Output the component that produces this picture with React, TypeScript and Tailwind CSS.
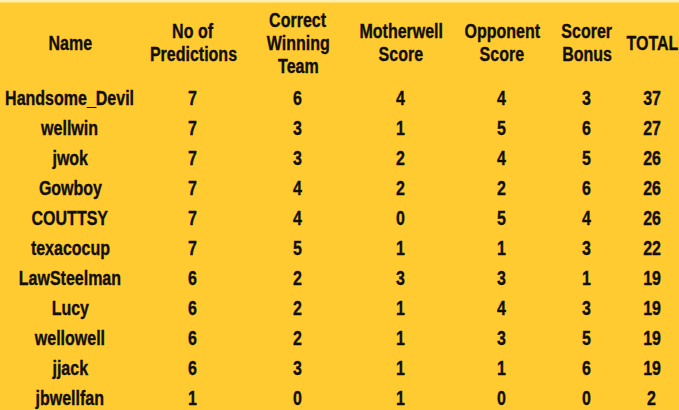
import React from "react";

type Row = {
  name: string;
  predictions: number;
  winning: number;
  motherwell: number;
  opponent: number;
  bonus: number;
  total: number;
};

const ROWS: Row[] = [
  { name: "Handsome_Devil", predictions: 7, winning: 6, motherwell: 4, opponent: 4, bonus: 3, total: 37 },
  { name: "wellwin", predictions: 7, winning: 3, motherwell: 1, opponent: 5, bonus: 6, total: 27 },
  { name: "jwok", predictions: 7, winning: 3, motherwell: 2, opponent: 4, bonus: 5, total: 26 },
  { name: "Gowboy", predictions: 7, winning: 4, motherwell: 2, opponent: 2, bonus: 6, total: 26 },
  { name: "COUTTSY", predictions: 7, winning: 4, motherwell: 0, opponent: 5, bonus: 4, total: 26 },
  { name: "texacocup", predictions: 7, winning: 5, motherwell: 1, opponent: 1, bonus: 3, total: 22 },
  { name: "LawSteelman", predictions: 6, winning: 2, motherwell: 3, opponent: 3, bonus: 1, total: 19 },
  { name: "Lucy", predictions: 6, winning: 2, motherwell: 1, opponent: 4, bonus: 3, total: 19 },
  { name: "wellowell", predictions: 6, winning: 2, motherwell: 1, opponent: 3, bonus: 5, total: 19 },
  { name: "jjack", predictions: 6, winning: 3, motherwell: 1, opponent: 1, bonus: 6, total: 19 },
  { name: "jbwellfan", predictions: 1, winning: 0, motherwell: 1, opponent: 0, bonus: 0, total: 2 },
];

const HEADERS: string[][] = [
  ["Name"],
  ["No of", "Predictions"],
  ["Correct", "Winning", "Team"],
  ["Motherwell", "Score"],
  ["Opponent", "Score"],
  ["Scorer", "Bonus"],
  ["TOTAL"],
];

// narrow bold look: Arial-width font squeezed horizontally
function Narrow({ children }: { children: React.ReactNode }) {
  return (
    <div className="flex justify-center">
      <span className="inline-block shrink-0 whitespace-nowrap scale-x-[0.8]">{children}</span>
    </div>
  );
}

export default function App() {
  return (
    <div className="h-[410px] w-[679px] overflow-hidden bg-[#ffcb30] font-['Liberation_Sans',Arial,sans-serif] font-bold text-[20px] text-[#120f0a] [-webkit-text-stroke:0.35px_#120f0a]">
      <div className="h-[2px] bg-[#fdf1b2]" />
      <div className="h-[1px] bg-[#ffdc6a]" />
      <table className="w-[682px] table-fixed border-collapse">
        <colgroup>
          <col className="w-[140px]" />
          <col className="w-[106px]" />
          <col className="w-[104px]" />
          <col className="w-[102px]" />
          <col className="w-[100px]" />
          <col className="w-[70px]" />
          <col className="w-[60px]" />
        </colgroup>
        <thead>
          <tr className="h-[80px]">
            {HEADERS.map((lines, i) => (
              <th key={i} className="p-0 align-middle leading-[23px] font-bold">
                {lines.map((line) => (
                  <Narrow key={line}>{line}</Narrow>
                ))}
              </th>
            ))}
          </tr>
        </thead>
        <tbody>
          {ROWS.map((row) => (
            <tr key={row.name} className="h-[30px]">
              <td className="p-0"><Narrow>{row.name}</Narrow></td>
              <td className="p-0"><Narrow>{row.predictions}</Narrow></td>
              <td className="p-0"><Narrow>{row.winning}</Narrow></td>
              <td className="p-0"><Narrow>{row.motherwell}</Narrow></td>
              <td className="p-0"><Narrow>{row.opponent}</Narrow></td>
              <td className="p-0"><Narrow>{row.bonus}</Narrow></td>
              <td className="p-0"><Narrow>{row.total}</Narrow></td>
            </tr>
          ))}
        </tbody>
      </table>
    </div>
  );
}
